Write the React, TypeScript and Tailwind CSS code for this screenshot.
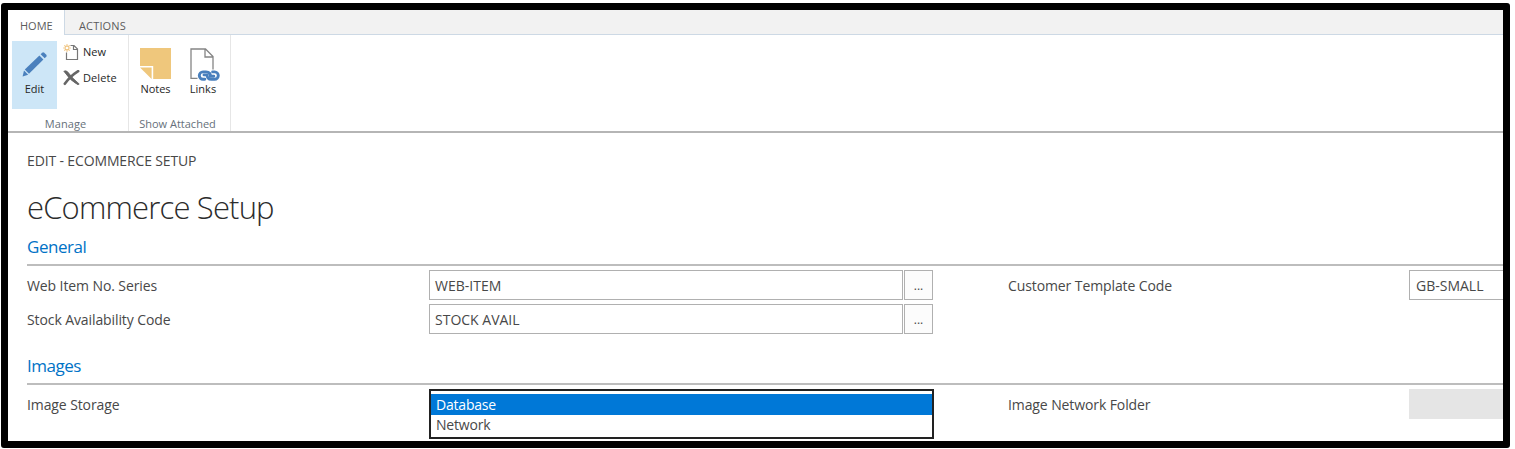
import React from "react";

function PencilIcon() {
  return (
    <svg width="26" height="26" viewBox="0 0 26 26" className="block">
      <g fill="#4a80bd">
        <path d="M.6 25.4 L2 19.6 L6.2 23.8 Z" />
        <path d="M2.8 18.6 L17.4 4.5 L21.4 8.5 L7 22.8 Z" />
        <path d="M18.6 3.3 L20.2 1.7 Q21.2 .9 22.2 1.7 L24.3 3.8 Q25.1 4.8 24.3 5.8 L22.7 7.3 Z" />
      </g>
    </svg>
  );
}

function NewIcon() {
  return (
    <svg width="16" height="17" viewBox="0 0 16 17" className="block">
      <path d="M7.5 1.5 H11 L14.5 5 V15.5 H3.5 V8.5 M10.5 1.5 V5.5 H14.5" fill="none" stroke="#777" strokeWidth="1.2" />
      <path d="M4 .3 V7.7 M.3 4 H7.7 M1.4 1.4 L6.6 6.6 M6.6 1.4 L1.4 6.6" stroke="#efc27c" strokeWidth="1.2" />
      <circle cx="4" cy="4" r="1.2" fill="#fff" />
    </svg>
  );
}

function DeleteIcon() {
  return (
    <svg width="17" height="16" viewBox="0 0 17 16" className="block">
      <path d="M.8 1.2 Q3 .2 4.6 1.8 Q9 8 16.2 14 L15 14.8 Q7.5 11 .8 1.2 Z" fill="#666" stroke="#666" strokeWidth=".8" />
      <path d="M15.2 1.2 Q7.5 6 1.8 13.8" fill="none" stroke="#666" strokeWidth="2.6" strokeLinecap="round" />
    </svg>
  );
}

function NotesIcon() {
  return (
    <svg width="31" height="31" viewBox="0 0 31 31" className="block">
      <path d="M0 0 H31 V31 H13.2 V18 H0 Z" fill="#efc77c" />
      <path d="M0 19.6 H11.6 V31 Z" fill="#efc77c" />
    </svg>
  );
}

function LinksIcon() {
  return (
    <svg width="30" height="33" viewBox="0 0 30 33" className="block">
      <path d="M7.5 30.3 H1 V1 H15.5 L23 8.5 V21.5 M15 1 V9 H23" fill="none" stroke="#858585" strokeWidth="1.3" />
      <g fill="none" stroke="#4a80bd" strokeWidth="2.9" strokeLinecap="round">
        <path d="M14.8 31.3 H13 A3.7 3.7 0 0 1 13 23.9 H16 C19.5 23.9 20.6 26 20.4 28.3 H23.8" />
        <path d="M22.6 23.9 H24.6 A3.7 3.7 0 0 1 24.6 31.3 H21.6 C18.1 31.3 17 29.2 17.2 26.9 H14" />
      </g>
    </svg>
  );
}

function SectionHeading({ children }: { children: React.ReactNode }) {
  return (
    <h2 className="ml-[19px] h-[30px] border-b-2 border-[#bdbdbd] text-[17px] leading-[22px] tracking-[-0.48px] text-[#0072c6]">
      {children}
    </h2>
  );
}

function Label({ children }: { children: React.ReactNode }) {
  return <div className="pt-[6px] text-[14px] leading-[20px] tracking-[-0.1px] text-[#484848]">{children}</div>;
}

function LookupField({ value }: { value: string }) {
  return (
    <div className="flex h-[30px] gap-px">
      <div className="flex w-[474px] items-center border border-[#b0b0b0] pl-[5px] text-[14px] text-[#484848]">
        {value}
      </div>
      <div className="flex w-[29px] items-center justify-center border border-[#b0b0b0] bg-[#fcfcfc] pt-[2px] text-[12px] text-[#484848]">
        ...
      </div>
    </div>
  );
}

export default function App() {
  return (
    <div className="h-[449px] w-[1515px] overflow-hidden bg-white pl-px pt-[3px] font-['Open_Sans','Noto_Sans',sans-serif]">
      <div className="flex h-[445px] w-[1509px] flex-col overflow-hidden rounded-[3px] border-[7px] border-black bg-white">
        <nav className="flex h-[25px] shrink-0 text-[11px] leading-[31px] text-[#5c5c5c]">
          <div className="w-[57px] border-r border-[#cdd9e5] bg-white pl-3">HOME</div>
          <div className="grow border-b border-[#cdd9e5] bg-[#f2f2f2] pl-[14px] tracking-[0.15px]">ACTIONS</div>
        </nav>

        <div className="flex h-[98px] shrink-0 border-b-2 border-[#b5b5b5] text-[11px] text-[#262626]">
          <section className="flex h-[96px] w-[121px] flex-col border-r border-[#e6e6e6] pl-1 pt-[6px]">
            <div className="flex h-[68px] shrink-0">
              <div className="flex w-[45px] flex-col items-center bg-[#cde6f7] pt-[10px]">
                <PencilIcon />
                <span className="mt-1 leading-4">Edit</span>
              </div>
              <div className="flex flex-col gap-[10px] pl-[6px] pt-[3px]">
                <div className="flex h-4 items-center gap-1">
                  <NewIcon />
                  <span className="leading-4">New</span>
                </div>
                <div className="flex h-4 items-center gap-[3px]">
                  <DeleteIcon />
                  <span className="leading-4 tracking-[0.1px]">Delete</span>
                </div>
              </div>
            </div>
            <span className="mt-[7px] pr-[9px] text-center leading-[15px] tracking-[0.1px] text-[#66707a]">Manage</span>
          </section>
          <section className="flex h-[96px] w-[102px] flex-col border-r border-[#e6e6e6] pt-[13px]">
            <div className="flex h-[61px] shrink-0">
              <div className="flex w-[53px] flex-col items-center">
                <NotesIcon />
                <span className="mt-[2px] leading-4">Notes</span>
              </div>
              <div className="flex w-[42px] flex-col items-center">
                <div className="h-[33px] pl-[4px]">
                  <LinksIcon />
                </div>
                <span className="leading-4">Links</span>
              </div>
            </div>
            <span className="mt-[7px] pr-[4px] text-center leading-[15px] text-[#66707a]">Show Attached</span>
          </section>
        </div>

        <main className="flex flex-col">
          <div className="ml-[19px] mt-[18px] text-[14px] leading-5 tracking-[-0.14px] text-[#484848]">EDIT - ECOMMERCE SETUP</div>
          <h1 className="ml-[19px] mt-[14px] text-[31px] font-light leading-[44px] tracking-[-0.83px] text-[#2c2c2c]">
            eCommerce Setup
          </h1>
          <div className="h-[7px]" />
          <SectionHeading>General</SectionHeading>
          <div className="grid grid-cols-[402px_579px_401px_1fr] gap-y-[4px] pl-[19px] pt-[4px]">
            <Label>Web Item No. Series</Label>
            <LookupField value="WEB-ITEM" />
            <Label>Customer Template Code</Label>
            <div className="flex items-center border border-r-0 border-[#b0b0b0] pl-[6px] text-[14px] text-[#484848]">
              GB-SMALL
            </div>
            <Label>Stock Availability Code</Label>
            <LookupField value="STOCK AVAIL" />
          </div>
          <div className="h-[21px]" />
          <SectionHeading>Images</SectionHeading>
          <div className="grid grid-cols-[402px_579px_401px_1fr] pl-[19px] pt-[4px]">
            <Label>Image Storage</Label>
            <div className="h-[50px] w-[505px] border-2 border-[#222] pt-[3px] text-[14px] leading-[20px] tracking-[-0.2px]">
              <div className="h-[21px] bg-[#0078d7] pl-[5px] leading-[21px] text-white">Database</div>
              <div className="pl-[5px] text-[#484848]">Network</div>
            </div>
            <Label>Image Network Folder</Label>
            <div className="h-[30px] bg-[#e5e5e5]" />
          </div>
        </main>
      </div>
    </div>
  );
}
